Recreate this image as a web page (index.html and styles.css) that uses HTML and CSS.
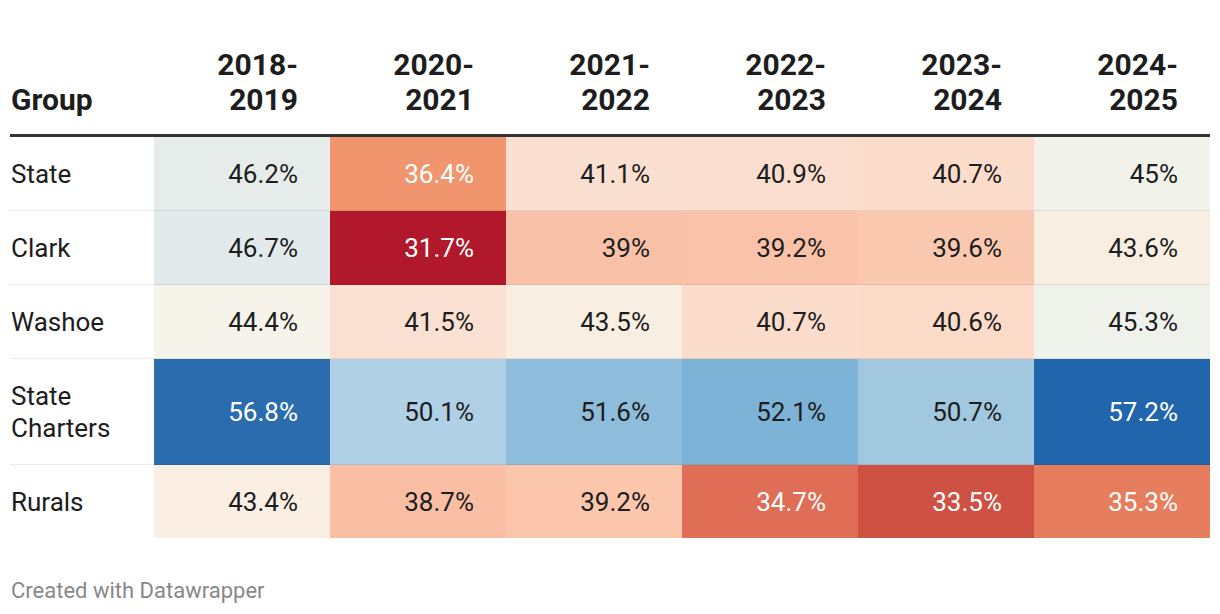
FILE: index.html
```html
<!DOCTYPE html>
<html lang="en">
<head>
<meta charset="utf-8">
<title>Table</title>
<link rel="stylesheet" href="styles.css">
</head>
<body>
<div class="chart">
  <table class="heat">
    <colgroup>
      <col class="c-group">
      <col class="c-val"><col class="c-val"><col class="c-val">
      <col class="c-val"><col class="c-val"><col class="c-val">
    </colgroup>
    <thead>
      <tr>
        <th class="h-group">Group</th>
        <th>2018-<br>2019</th>
        <th>2020-<br>2021</th>
        <th>2021-<br>2022</th>
        <th>2022-<br>2023</th>
        <th>2023-<br>2024</th>
        <th>2024-<br>2025</th>
      </tr>
    </thead>
    <tbody>
      <tr>
        <td class="label">State</td>
        <td style="background:#e6ecea">46.2%</td>
        <td class="light" style="background:#f0956d">36.4%</td>
        <td style="background:#fbe0d1">41.1%</td>
        <td style="background:#fbdecf">40.9%</td>
        <td style="background:#fcdccb">40.7%</td>
        <td style="background:#f1f2ea">45%</td>
      </tr>
      <tr>
        <td class="label">Clark</td>
        <td style="background:#e2eaeb">46.7%</td>
        <td class="light" style="background:#b2182b">31.7%</td>
        <td style="background:#f9c2a8">39%</td>
        <td style="background:#fac3a9">39.2%</td>
        <td style="background:#fbc9b0">39.6%</td>
        <td style="background:#f8efe2">43.6%</td>
      </tr>
      <tr>
        <td class="label">Washoe</td>
        <td style="background:#f6f4ea">44.4%</td>
        <td style="background:#fbe1d3">41.5%</td>
        <td style="background:#f8efe2">43.5%</td>
        <td style="background:#fcdccb">40.7%</td>
        <td style="background:#fcdbc9">40.6%</td>
        <td style="background:#eff2ea">45.3%</td>
      </tr>
      <tr>
        <td class="label">State<br>Charters</td>
        <td class="light" style="background:#2b6cae">56.8%</td>
        <td style="background:#b0d0e5">50.1%</td>
        <td style="background:#8ebcdb">51.6%</td>
        <td style="background:#7cb3d6">52.1%</td>
        <td style="background:#a2c8e0">50.7%</td>
        <td class="light" style="background:#2166ac">57.2%</td>
      </tr>
      <tr>
        <td class="label">Rurals</td>
        <td style="background:#fbeee2">43.4%</td>
        <td style="background:#f9bea3">38.7%</td>
        <td style="background:#fbc6ac">39.2%</td>
        <td class="light" style="background:#e06d55">34.7%</td>
        <td class="light" style="background:#cf5144">33.5%</td>
        <td class="light" style="background:#e67e5e">35.3%</td>
      </tr>
    </tbody>
  </table>
  <div class="footer">Created with Datawrapper</div>
</div>
</body>
</html>
```
FILE: styles.css
```css
html, body {
  margin: 0;
  padding: 0;
  background: #ffffff;
}

body {
  font-family: Roboto, "Liberation Sans", Arial, sans-serif;
  color: #1d1d1d;
}

.chart {
  padding: 30px 10px 0 10px;
}

.heat {
  width: 1200px;
  border-collapse: collapse;
  table-layout: fixed;
}

.c-group {
  width: 144px;
}

.c-val {
  width: 176px;
}

.heat th {
  font-size: 30px;
  font-weight: 700;
  line-height: 35px;
  text-align: right;
  vertical-align: bottom;
  padding: 17px 32px 17px 0;
  border-bottom: 3px solid #333333;
  color: #1d1d1d;
}

.heat th.h-group {
  text-align: left;
  padding-left: 1px;
  padding-right: 0;
}

.heat td {
  font-size: 26px;
  font-weight: 400;
  line-height: 32px;
  text-align: right;
  vertical-align: middle;
  padding: 20.5px 32px 20.5px 0;
  border-bottom: 1px solid rgba(0, 0, 0, 0.08);
  color: #1d1d1d;
}

.heat td.label {
  text-align: left;
  padding-left: 1px;
  padding-right: 0;
  border-bottom-color: #ececec;
}

.heat td.light {
  color: #ffffff;
}

.heat tbody tr:last-child td {
  border-bottom: none;
}

.footer {
  margin-top: 41px;
  padding-left: 1px;
  font-size: 22px;
  line-height: 24px;
  color: #888888;
}
```
